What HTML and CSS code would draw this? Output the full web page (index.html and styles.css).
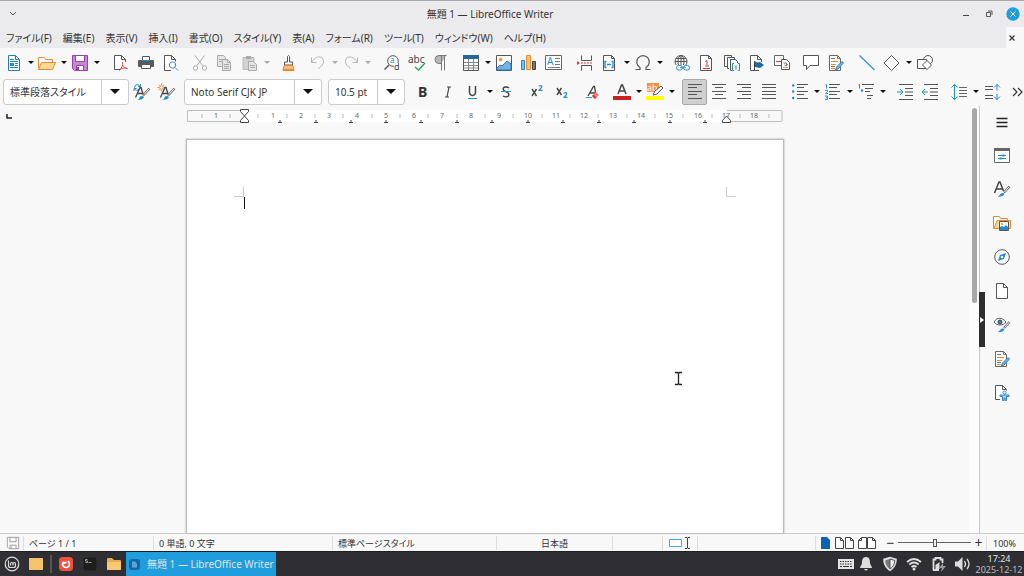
FILE: index.html
```html
<!DOCTYPE html>
<html lang="ja">
<head>
<meta charset="utf-8">
<meta name="viewport" content="width=device-width, initial-scale=1">
<title>無題 1 — LibreOffice Writer</title>
<link rel="stylesheet" href="styles.css">
</head>
<body>
<header class="titlebar">
  <button class="win-btn" aria-label="ウィンドウメニュー"><svg class="i" viewBox="0 0 16 16"><path d="M5 6l3 3 3-3" stroke="#555"/></svg></button>
  <h1 class="title">無題 1 — LibreOffice Writer</h1>
  <div class="win-controls">
    <button class="win-btn" aria-label="最小化"><svg class="i" viewBox="0 0 16 16"><path d="M6 9.500h6" stroke="#444"/></svg></button>
    <button class="win-btn" aria-label="元に戻す"><svg class="i" viewBox="0 0 16 16"><path d="M5.500 6.500h4v4h-4zM7 5h4v4" stroke="#555"/></svg></button>
    <button class="win-btn" aria-label="閉じる"><svg class="i" viewBox="0 0 16 16"><circle cx="8" cy="8" r="6.700" fill="#1f9ddc"/><path d="M5.500 5.500l5 5M10.500 5.500l-5 5" stroke="#fff"/></svg></button>
  </div>
</header>

<nav class="menubar">
  <button>ファイル(F)</button><button>編集(E)</button><button>表示(V)</button><button>挿入(I)</button><button>書式(O)</button><button>スタイル(Y)</button><button>表(A)</button><button>フォーム(R)</button><button>ツール(T)</button><button>ウィンドウ(W)</button><button>ヘルプ(H)</button>
  <button class="doc-close" aria-label="文書を閉じる"><svg class="i" viewBox="0 0 16 16"><path d="M3.500 5.500l5 5M8.500 5.500l-5 5" stroke="#333" stroke-width="1.200"/></svg></button>
</nav>

<div class="toolbar" role="toolbar" aria-label="標準">
  <div class="split"><button class="tool" aria-label="新規作成"><svg class="i" viewBox="0 0 16 16"><path d="M2.500.500h7l4 4v11h-11z" fill="#fff" stroke="#2a7ab8"/><path d="M9.500.500v4h4" stroke="#2a7ab8"/><path d="M4 4.500h4M4 6.500h8M4 12.500h8" stroke="#1f8ad2"/><path d="M4 8h4v3H4z" fill="#1f8ad2"/><path d="M9 8.500h3M9 10.500h3" stroke="#1f8ad2"/></svg></button><button class="arrow" aria-label="新規作成の種類"></button></div>
  <div class="split"><button class="tool" aria-label="開く"><svg class="i wide" viewBox="0 0 18 16"><path d="M.500 13.500v-11h6l1 2h7v3" fill="#fff" stroke="#ed8733"/><path d="M.500 14.500l3-7h14l-3 7z" fill="#fbdb93" stroke="#ed8733"/></svg></button><button class="arrow" aria-label="最近使用したファイル"></button></div>
  <div class="split"><button class="tool" aria-label="保存"><svg class="i" viewBox="0 0 16 16"><path d="M.500.500h15v15h-13l-2-2z" fill="#c786d0" stroke="#9a3da8"/><path d="M3.500.500h9v6h-9z" fill="#fff" stroke="#9a3da8"/><path d="M4.500 10.500h7v5h-7z" fill="#fff" stroke="#9a3da8"/><path d="M5 12h2v3H5z" fill="#9a3da8"/></svg></button><button class="arrow" aria-label="保存の種類"></button></div>
  <span class="sep-l"></span>
  <button class="tool" aria-label="PDFとしてエクスポート"><svg class="i" viewBox="0 0 16 16"><path d="M8 14.500H1.500v-14h7l4 4V7" fill="#fff" stroke="#555"/><path d="M8.500.500v4h4" stroke="#555"/><path d="M9.500 7c1 3-1 6-3 8.500M9.500 10c1 2 2.500 3 5 3.500M6.500 15c2-2 5-2.500 8-1.500" stroke="#e0454c"/></svg></button>
  <button class="tool" aria-label="印刷"><svg class="i" viewBox="0 0 16 16"><path d="M4.500 1.500h7v4h-7z" fill="#fff" stroke="#555"/><rect x="0" y="5" width="16" height="7" rx="1" fill="#5a5a5a"/><path d="M4 5h8v1H4z" fill="#2a8ad2"/><path d="M3.500 9.500h9v4h-9z" fill="#fff" stroke="#555"/></svg></button>
  <button class="tool" aria-label="印刷プレビュー"><svg class="i" viewBox="0 0 16 16"><path d="M8 15.500H1.500v-15h7l4 4v2" fill="#fff" stroke="#555"/><path d="M8.500.500v4h4" stroke="#555"/><circle cx="9.500" cy="10" r="3.200" fill="#fff" stroke="#2e90cf"/><path d="M12 12.500l3 3" stroke="#2e90cf"/></svg></button>
  <span class="sep-s"></span>
  <button class="tool" aria-label="切り取り"><svg class="i" viewBox="0 0 16 16"><path d="M3 .500l8 10.500M12.500.500l-8 10.500" stroke="#aaa"/><circle cx="3.500" cy="13" r="2.200" stroke="#aaa"/><circle cx="12.500" cy="13" r="2.200" stroke="#aaa"/></svg></button>
  <button class="tool" aria-label="コピー"><svg class="i" viewBox="0 0 16 16"><path d="M.500.500h6l2 2v9h-8z" fill="#e4e4e4" stroke="#aaa"/><path d="M5.500 4.500h5l3 3v8h-8z" fill="#e4e4e4" stroke="#aaa"/><path d="M2 4.500h3M2 6.500h3M7 9.500h5M7 11.500h5M7 13.500h5M10.500 4.500v3h3" stroke="#aaa"/></svg></button>
  <div class="split"><button class="tool" aria-label="貼り付け"><svg class="i" viewBox="0 0 16 16"><path d="M1 2.500h11v12H1z" fill="#d2d2d2" stroke="#bbb"/><path d="M4 1h5v3H4z" fill="#aaa"/><path d="M6.500 6.500h5l3 3v6h-8z" fill="#e4e4e4" stroke="#aaa"/><path d="M8 10.500h5M8 12.500h5" stroke="#aaa"/></svg></button><button class="arrow off" aria-label="貼り付けの種類"></button></div>
  <span class="sep-m"></span>
  <button class="tool" aria-label="書式のコピー"><svg class="i" viewBox="0 0 16 16"><path d="M6.500 7V1.500Q7.500-.500 8.500 1.500V7h3v3h-8V7z" fill="#fff" stroke="#555"/><path d="M3 10.500h9l1 5H2z" fill="#fbc284" stroke="#ed8733"/><path d="M2 14h11v1.500H2z" fill="#ed8733"/></svg></button>
  <span class="sep-s"></span>
  <div class="split"><button class="tool" aria-label="元に戻す"><svg class="i" viewBox="0 0 16 16"><path d="M1.500 2.500v5h5M1.500 7.500C6-.500 14 1 13.500 6.500c0 3-2.500 5-5 7" stroke="#b5b5b5"/></svg></button><button class="arrow off" aria-label="元に戻す履歴"></button></div>
  <div class="split"><button class="tool" aria-label="やり直し"><svg class="i" viewBox="0 0 16 16"><path d="M14.500 2.500v5h-5M14.500 7.500C10-.500 2 1 2.500 6.500c0 3 2.500 5 5 7" stroke="#b5b5b5"/></svg></button><button class="arrow off" aria-label="やり直し履歴"></button></div>
  <span class="sep-l"></span>
  <button class="tool" aria-label="検索と置換"><svg class="i" viewBox="0 0 16 16"><circle cx="9" cy="6" r="5.300" fill="#fff" stroke="#555"/><path d="M5 10L.500 14.500" stroke="#555" stroke-width="1.500"/><text x="6" y="8" font-size="8" fill="#1e8bcd">a</text><path d="M10 8h6v8h-6z" fill="#f8f8f8"/><text x="10" y="15" font-size="9" fill="#444">d</text></svg></button>
  <button class="tool" aria-label="スペルチェック"><svg class="i wide" viewBox="0 0 18 16"><text x="0" y="8" font-size="10" fill="#444">abc</text><path d="M7 12l3.500 3L17 8" stroke="#25a65a" stroke-width="1.300"/></svg></button>
  <button class="tool" aria-label="編集記号"><svg class="i" viewBox="0 0 16 16"><path d="M12 .500H5a4 4 0 000 8h2z" fill="#b8b8b8"/><path d="M12.500.500H5a4 4 0 000 8h2M7.500.500v15M10.500.500v15" stroke="#777"/></svg></button>
  <span class="sep-s"></span>
  <div class="split"><button class="tool" aria-label="表を挿入"><svg class="i" viewBox="0 0 16 16"><path d="M.500.500h15v15H.500z" fill="#fff" stroke="#555"/><path d="M0 0h16v4H0z" fill="#23699f"/><path d="M1 7.500h14M1 10.500h14M1 13h14M5.500 4v11M10.500 4v11" stroke="#888"/></svg></button><button class="arrow" aria-label="表のサイズ"></button></div>
  <button class="tool" aria-label="画像を挿入"><svg class="i" viewBox="0 0 16 16"><path d="M.500.500h15v15H.500z" fill="#fff" stroke="#555"/><circle cx="4.500" cy="4.500" r="2" fill="#f9a24c"/><path d="M1 13l3-3 2 1 5-5 4 3v6H1z" fill="#72b4e5" stroke="#2479b5"/></svg></button>
  <button class="tool" aria-label="グラフを挿入"><svg class="i" viewBox="0 0 16 16"><path d="M.500 5.500h3v9h-3z" fill="#83beec" stroke="#1e8bcd"/><path d="M5.500.500h4v14h-4z" fill="#fbc56f" stroke="#ed8733"/><path d="M11.500 6.500h3v8h-3z" fill="#777" stroke="#444"/></svg></button>
  <button class="tool" aria-label="テキストボックスを挿入"><svg class="i wide" viewBox="0 0 18 16"><path d="M.500.500h16v14H.500z" fill="#fff" stroke="#666"/><text x="2" y="10" font-size="10" fill="#1e8bcd">A</text><path d="M10 3.500h5M10 6.500h5M10 9.500h5M3 12.500h12" stroke="#777"/></svg></button>
  <span class="sep-m"></span>
  <button class="tool" aria-label="改ページを挿入"><svg class="i" viewBox="0 0 16 16"><path d="M4.500.500v5h10v-5M4.500 15.500v-5h10v5" stroke="#555"/><path d="M4 8h12" stroke="#d9363e" stroke-dasharray="2 1"/><path d="M0 6l3 2-3 2z" fill="#d9363e"/></svg></button>
  <div class="split"><button class="tool" aria-label="フィールドを挿入"><svg class="i" viewBox="0 0 16 16"><path d="M1.500.500h8l3 3v12h-11z" fill="#fff" stroke="#555"/><path d="M9.500.500v3h3" stroke="#555"/><path d="M4.500 6.500H3v6h1.500M9.500 6.500H11v6H9.500M5 9.500h4" stroke="#1e8bcd" stroke-width="1.300"/></svg></button><button class="arrow" aria-label="フィールドの種類"></button></div>
  <div class="split"><button class="tool" aria-label="特殊文字を挿入"><svg class="i" viewBox="0 0 16 16"><path d="M.500 14.500H5v-2a6.300 6.300 0 116 0v2h4.500" stroke="#555" stroke-width="1.200"/></svg></button><button class="arrow" aria-label="特殊文字の一覧"></button></div>
  <span class="sep-m"></span>
  <button class="tool" aria-label="ハイパーリンクを挿入"><svg class="i" viewBox="0 0 16 16"><circle cx="7" cy="6.500" r="6" stroke="#555"/><ellipse cx="7" cy="6.500" rx="3" ry="6" stroke="#555"/><path d="M1 6.500h12M2 3.500h10M7 .500v12" stroke="#555"/><path d="M2 10h14v6H2z" fill="#f8f8f8"/><rect x="2.500" y="10.500" width="6" height="4.500" rx="2.200" stroke="#2e90cf"/><rect x="9.500" y="10.500" width="6" height="4.500" rx="2.200" stroke="#2e90cf"/><path d="M6 12.700h6" stroke="#2e90cf"/></svg></button>
  <button class="tool" aria-label="脚注を挿入"><svg class="i" viewBox="0 0 16 16"><path d="M1.500.500h8l3 3v12h-11z" fill="#fff" stroke="#555"/><path d="M9.500.500v3h3" stroke="#555"/><path d="M4 13.500h7M6 6.500l2-1v5M6 11h4" stroke="#d9363e"/></svg></button>
  <button class="tool" aria-label="相互参照を挿入"><svg class="i" viewBox="0 0 16 16"><path d="M3 11.500H.500V.500h7V3M5 13.500H3.500v-11h7V5M8 15.500H6.500v-11h5l2 2V8" stroke="#555"/><path d="M10 8.500H8.500v7H10M14 8.500h1.500v7H14M12 10.500v4" stroke="#1e8bcd"/></svg></button>
  <button class="tool" aria-label="ブックマークを挿入"><svg class="i" viewBox="0 0 16 16"><path d="M10 15.500H1.500V.500h7l4 4V7M8.500.500v4h4" fill="#fff" stroke="#555"/><path d="M5.500 6v10" stroke="#444"/><path d="M6 6.500l3 1 2-.500 4 3-4 3-5-1z" fill="#1769aa"/></svg></button>
  <button class="tool" aria-label="ハイパーリンク先"><svg class="i" viewBox="0 0 16 16"><path d="M.500.500h9v10h-9z" fill="#fff" stroke="#666"/><path d="M2 6.500h5" stroke="#d9363e"/><path d="M7.500 4.500h5l3 3v7h-8z" fill="#fff" stroke="#555"/><path d="M9.500 8h3v3M10.500 10l2 1 1-2" stroke="#777"/><path d="M9 12.500h5" stroke="#e88"/></svg></button>
  <span class="sep-s"></span>
  <button class="tool" aria-label="コメントを挿入"><svg class="i" viewBox="0 0 16 16"><path d="M.500.500h15v10H7l-3.500 4v-4h-3z" fill="#fff" stroke="#555"/></svg></button>
  <button class="tool" aria-label="変更の記録"><svg class="i" viewBox="0 0 16 16"><path d="M1.500.500h8l3 3v12h-11z" fill="#fff" stroke="#666"/><path d="M3 3.500h4M3 11.500h4M9.500.500v3h3" stroke="#777"/><path d="M3 6.500h7M3 9.500h5M3 13.500h4" stroke="#ed8733"/><path d="M7.500 15l1-3 5.500-5.500 1.500 1.500-5.500 6z" fill="#72b4e5" stroke="#2e84c4"/></svg></button>
  <span class="sep-m"></span>
  <button class="tool" aria-label="線を挿入"><svg class="i" viewBox="0 0 16 16"><path d="M.500.500l15 14.500" stroke="#2e90cf" stroke-width="1.200"/></svg></button>
  <div class="split"><button class="tool" aria-label="図形"><svg class="i" viewBox="0 0 16 16"><path d="M7.500.500L15 8l-7.500 7.500L0 8z" fill="#fff" stroke="#555"/></svg></button><button class="arrow" aria-label="図形の種類"></button></div>
  <button class="tool" aria-label="図形描画機能"><svg class="i" viewBox="0 0 16 16"><circle cx="11" cy="5" r="4.500" stroke="#555"/><path d="M.500 4.500h9v9h-9z" fill="#f8f8f8" stroke="#555"/><path d="M10 5.500l4.500 4.500-4.500 4.500L5.500 10z" fill="#fff" stroke="#555"/></svg></button>
</div>

<div class="toolbar format" role="toolbar" aria-label="書式設定">
  <div class="combo style"><input type="text" aria-label="段落スタイル" value="標準段落スタイル"><button class="arrow big" aria-label="段落スタイルの一覧"></button></div>
  <button class="tool" aria-label="スタイルの更新"><svg class="i wide" viewBox="0 0 18 16"><path d="M1.500 3.500A3 3 0 016.500 1.500M7.500 0v2.500H5M7 4A3 3 0 012 5.500M1 7V4.500h2.500" stroke="#1e8bcd"/><path d="M2.500 13.500L7 3.500h1l2.500 8M5 9.500h4.500" stroke="#444" stroke-width="1.300"/><path d="M16.500 4.500L10.500 11" stroke="#666" stroke-width="2.400"/><path d="M16.300 4.700L11 10.500" stroke="#fff"/><path d="M4 15.500c3 0 2-3.500 5-3.500 4 .500 1 4.500-5 3.500z" fill="#1e8bcd"/></svg></button>
  <button class="tool" aria-label="新規スタイル"><svg class="i wide" viewBox="0 0 18 16"><circle cx="3.500" cy="3.500" r="1.800" stroke="#ed8733"/><path d="M3.500 -.500V1M3.500 6v1.500M-.500 3.500H1M6 3.500h1.500M.800.800l1 1M6.200.800l-1 1M.800 6.200l1-1" stroke="#ed8733"/><path d="M2.500 13.500L7 3.500h1l2.500 8M5 9.500h4.500" stroke="#444" stroke-width="1.300"/><path d="M16.500 4.500L10.500 11" stroke="#666" stroke-width="2.400"/><path d="M16.300 4.700L11 10.500" stroke="#fff"/><path d="M4 15.500c3 0 2-3.500 5-3.500 4 .500 1 4.500-5 3.500z" fill="#1e8bcd"/></svg></button>
  <span class="sep-s"></span>
  <div class="combo font"><input type="text" aria-label="フォント名" value="Noto Serif CJK JP"><button class="arrow big" aria-label="フォントの一覧"></button></div>
  <span class="sep-m"></span>
  <div class="combo size"><input type="text" aria-label="フォントサイズ" value="10.5 pt"><button class="arrow big" aria-label="フォントサイズの一覧"></button></div>
  <span class="sep-m"></span>
  <button class="tool" aria-label="太字"><svg class="i" viewBox="0 0 16 16"><text x="3" y="13" font-size="14" font-weight="700" fill="#333">B</text></svg></button>
  <button class="tool" aria-label="斜体"><svg class="i" viewBox="0 0 16 16"><path d="M7 3h4M5 13h4M9 3L7 13" stroke="#444" stroke-width="1.200"/></svg></button>
  <div class="split"><button class="tool" aria-label="下線"><svg class="i" viewBox="0 0 16 16"><path d="M4.500 2v6c0 4.500 6 4.500 6 0V2" stroke="#444" stroke-width="1.500"/><path d="M3 14.500h9" stroke="#1e8bcd"/></svg></button><button class="arrow" aria-label="下線の種類"></button></div>
  <button class="tool" aria-label="取り消し線"><svg class="i" viewBox="0 0 16 16"><path d="M11 4C9 2.500 5 2.500 5.200 5.200S11 8 11 10.500s-3.500 3-6 1.500" stroke="#444" stroke-width="1.400"/><path d="M3 7.500h10" stroke="#2e90cf"/></svg></button>
  <span class="sep-m"></span>
  <button class="tool" aria-label="上付き"><svg class="i" viewBox="0 0 16 16"><path d="M3 5l4.500 7M7.500 5L3 12" stroke="#444" stroke-width="1.400"/><text x="9" y="7" font-size="8" font-weight="700" fill="#1e8bcd">2</text></svg></button>
  <button class="tool" aria-label="下付き"><svg class="i" viewBox="0 0 16 16"><path d="M3 4l4.500 7M7.500 4L3 11" stroke="#444" stroke-width="1.400"/><text x="9" y="14" font-size="8" font-weight="700" fill="#1e8bcd">2</text></svg></button>
  <span class="sep-m"></span>
  <button class="tool" aria-label="書式のクリア"><svg class="i" viewBox="0 0 16 16"><path d="M3 12L8.500 2.500h1L10.500 9M5 9h5" stroke="#444" stroke-width="1.300"/><path d="M1 13.500h6" stroke="#2e90cf"/><path d="M7 12l4-4 3 3-4 4z" fill="#f7797d"/><path d="M7 12l1.500-1.500 3 3L10 15z" fill="#d9363e"/></svg></button>
  <span class="sep-s"></span>
  <div class="split"><button class="tool" aria-label="文字の色"><svg class="i wide" viewBox="0 0 18 16"><path d="M5 10L8.500 1h1L13 10M6.500 7h5" stroke="#444" stroke-width="1.500"/><path d="M0 12h18v4H0z" fill="#c9211e"/></svg></button><button class="arrow" aria-label="文字の色の一覧"></button></div>
  <div class="split"><button class="tool" aria-label="蛍光ペンの色"><svg class="i wide" viewBox="0 0 18 16"><path d="M1 -1h12v9H1z" fill="#f7933f"/><text x="1" y="7" font-size="9" fill="#fff">ab</text><path d="M7 11l2-4 6-5 2 2-6 6z" fill="#fff" stroke="#555"/><path d="M0 12h18v4H0z" fill="#ffff00"/></svg></button><button class="arrow" aria-label="蛍光ペンの色の一覧"></button></div>
  <span class="sep-m"></span>
  <button class="tool pressed" aria-label="左揃え" aria-pressed="true"><svg class="i" viewBox="0 0 16 16"><path d="M1 .500h14M1 3.500h9M1 7.500h14M1 10.500h9M1 14.500h14" stroke="#555"/></svg></button>
  <button class="tool" aria-label="中央揃え"><svg class="i" viewBox="0 0 16 16"><path d="M1 .500h14M4 3.500h8M1 7.500h14M4 10.500h8M1 14.500h14" stroke="#555"/></svg></button>
  <button class="tool" aria-label="右揃え"><svg class="i" viewBox="0 0 16 16"><path d="M1 .500h14M6 3.500h9M1 7.500h14M6 10.500h9M1 14.500h14" stroke="#555"/></svg></button>
  <button class="tool" aria-label="両端揃え"><svg class="i" viewBox="0 0 16 16"><path d="M1 .500h14M1 3.500h14M1 7.500h14M1 10.500h14M1 14.500h14" stroke="#555"/></svg></button>
  <span class="sep-m"></span>
  <div class="split"><button class="tool" aria-label="箇条書き"><svg class="i" viewBox="0 0 16 16"><path d="M5 .500h11M5 3.500h7M5 7.500h11M5 10.500h7M5 14.500h11" stroke="#555"/><circle cx="1.200" cy="1.500" r="1.200" fill="#1e8bcd"/><circle cx="1.200" cy="7.500" r="1.200" fill="#1e8bcd"/><circle cx="1.200" cy="14" r="1.200" fill="#1e8bcd"/></svg></button><button class="arrow" aria-label="箇条書きの種類"></button></div>
  <div class="split"><button class="tool" aria-label="番号付け"><svg class="i" viewBox="0 0 16 16"><path d="M4 .500h11M4 3.500h8M4 7.500h11M4 10.500h8M4 14.500h11" stroke="#555"/><path d="M.500 1l1-.500v4M0 6.500h2.500v1.300L.500 9.500H3M0 12h2.500v3.500H0M1 13.700h1.500" stroke="#2e90cf"/></svg></button><button class="arrow" aria-label="番号付けの種類"></button></div>
  <div class="split"><button class="tool" aria-label="アウトライン"><svg class="i" viewBox="0 0 16 16"><path d="M4 .500h12M7 4.500h8M7 7.500h5M9 11.500h6M9 14.500h4" stroke="#555"/><path d="M.500 1l1-.500v4" stroke="#2e90cf"/><circle cx="4" cy="6.500" r="1.200" fill="#1e8bcd"/></svg></button><button class="arrow" aria-label="アウトラインの種類"></button></div>
  <span class="sep-m"></span>
  <button class="tool" aria-label="インデントを増やす"><svg class="i wide" viewBox="0 0 18 16"><path d="M3 .500h14M9 4.500h8M9 8h8M9 11.500h8M3 15.500h14" stroke="#555"/><path d="M1 8h6M4 5l3 3-3 3" stroke="#1e8bcd"/></svg></button>
  <button class="tool" aria-label="インデントを減らす"><svg class="i wide" viewBox="0 0 18 16"><path d="M3 .500h14M9 4.500h8M9 8h8M9 11.500h8M3 15.500h14" stroke="#555"/><path d="M1 8h6M4 5L1 8l3 3" stroke="#1e8bcd"/></svg></button>
  <span class="sep-s"></span>
  <div class="split"><button class="tool" aria-label="行間"><svg class="i" viewBox="0 0 16 16"><path d="M8 3.500h8M8 6.500h8M8 9.500h8M8 12.500h8" stroke="#666"/><path d="M3.500.500v15M.500 3.500l3-3 3 3M.500 12.500l3 3 3-3" stroke="#1e8bcd"/></svg></button><button class="arrow" aria-label="行間の種類"></button></div>
  <button class="tool" aria-label="段落間隔を増やす"><svg class="i wide" viewBox="0 0 18 16"><path d="M2 2.500h8M2 5.500h8M2 11.500h8M2 14.500h8" stroke="#555"/><path d="M14 .500v6M11 3.500l3-3 3 3M14 10v6M11 12.500l3 3 3-3" stroke="#1e8bcd"/></svg></button>
  <button class="tool more" aria-label="その他"><svg class="i" viewBox="0 0 16 16"><path d="M5 4l4 4-4 4M10 4l4 4-4 4" stroke="#333" stroke-width="1.200"/></svg></button>
</div>

<main class="work">
  <section class="editor">
    <div class="ruler-row">
      <svg class="tab-kind" viewBox="0 0 6 6"><path d="M1 1v4h5" stroke="#222" stroke-width="1.500"/></svg>
      <svg class="ruler" viewBox="0 0 598 16" role="img" aria-label="ルーラー">
        <path d="M58 2h483v12H58z" fill="#fff"/>
        <path d="M58 2.500H1.500v11H58M541 2.500h54q1 0 1 1v9q0 1-1 1h-54" stroke="#bdbdbd"/>
        <path d="M16 6v4M44 6v4M72 6v4M101 6v4M129 6v4M157 6v4M186 6v4M214 6v4M242 6v4M271 6v4M299 6v4M327 6v4M356 6v4M384 6v4M412 6v4M441 6v4M469 6v4M497 6v4M526 6v4M554 6v4M583 6v4" stroke="#bbb"/>
        <path d="M94 12v3M130 12v3M165 12v3M200 12v3M235 12v3M271 12v3M306 12v3M342 12v3M377 12v3M413 12v3M448 12v3M484 12v3M519 12v3" stroke="#444"/>
        <path d="M92 14.500h4M128 14.500h4M163 14.500h4M198 14.500h4M233 14.500h4M269 14.500h4M304 14.500h4M340 14.500h4M375 14.500h4M411 14.500h4M446 14.500h4M482 14.500h4M517 14.500h4" stroke="#444"/>
        <g font-size="7" fill="#666" text-anchor="middle"><text x="30" y="10">1</text><text x="87" y="10">1</text><text x="115" y="10">2</text><text x="143" y="10">3</text><text x="171" y="10">4</text><text x="200" y="10">5</text><text x="228" y="10">6</text><text x="256" y="10">7</text><text x="285" y="10">8</text><text x="313" y="10">9</text><text x="342" y="10">10</text><text x="370" y="10">11</text><text x="398" y="10">12</text><text x="427" y="10">13</text><text x="455" y="10">14</text><text x="483" y="10">15</text><text x="512" y="10">16</text><text x="540" y="10">17</text><text x="568" y="10">18</text></g>
        <path d="M54.500 1.500h8v2l-4 4.500-4-4.500zM54.500 14.500h8v-2L58.500 8l-4 4.500z" fill="#fff" stroke="#444"/>
        <path d="M536.500 14.500h8v-2l-4-4.500-4 4.500z" fill="#fff" stroke="#444"/>
      </svg>
    </div>
    <article class="page" aria-label="文書">
      <div class="text-area"><span class="crop left"></span><span class="caret"></span><span class="crop right"></span></div>
    </article>
    <svg class="pointer" viewBox="0 0 9 15"><path d="M1 1.500h2.500l1 1 1-1H8M1 13.500h2.500l1-1 1 1H8M4.500 2v11" stroke="#222" stroke-width="1.300"/></svg>
  </section>
  <div class="scroll"><div class="thumb"></div></div>
  <aside class="sidebar">
    <button class="handle" aria-label="サイドバーを隠す"><svg viewBox="0 0 5 8"><path d="M1 1l4 3-4 3z" fill="#fff"/></svg></button>
    <button class="deck" aria-label="サイドバーの設定"><svg class="i" viewBox="0 0 16 16"><path d="M2.500 4.500h11M2.500 8.500h11M2.500 12.500h11" stroke="#222" stroke-width="1.500"/></svg></button>
    <button class="deck" aria-label="プロパティ"><svg class="i" viewBox="0 0 16 16"><path d="M.500 1.500h15v14H.500z" fill="#fff" stroke="#666"/><path d="M0 1h16v3H0z" fill="#666"/><path d="M4 8.500h8M4 11.500h8" stroke="#1e8bcd"/><path d="M9.500 7.500v2M6.500 10.500v2" stroke="#1e8bcd" stroke-width="2"/></svg></button>
    <button class="deck" aria-label="スタイル"><svg class="i" viewBox="0 0 16 16"><path d="M.500 12L5 1h1l3.500 9M2.500 8h6" stroke="#444" stroke-width="1.500"/><path d="M15.500 5.500L10 11.500" stroke="#666" stroke-width="2.400"/><path d="M15.300 5.700L10.500 11" stroke="#fff"/><path d="M3 15.500c3 0 3-4 6-3.500 3.500.500 0 4.500-6 3.500z" fill="#2e90cf"/></svg></button>
    <button class="deck" aria-label="ギャラリー"><svg class="i wide" viewBox="0 0 18 16"><path d="M.500 13.500v-12h6l1 2h7v2h3" fill="#fff" stroke="#ed8733"/><path d="M1 13.500l3-8h13.500v8z" fill="#fbdb93" stroke="#ed8733"/><path d="M6.500 6.500h9v9h-9z" fill="#fff" stroke="#555"/><path d="M7 15v-3l2-1 2 1 2-2 2 2v3z" fill="#1e8bcd"/><circle cx="9" cy="9" r="1" fill="#ed8733"/></svg></button>
    <button class="deck" aria-label="ナビゲーター"><svg class="i" viewBox="0 0 16 16"><circle cx="8" cy="8" r="7.300" fill="#fff" stroke="#555"/><path d="M12 4l-2 6-6 2 2-6z" fill="#1e8bcd"/><circle cx="8" cy="8" r="1.300" fill="#fff"/></svg></button>
    <button class="deck" aria-label="ページ"><svg class="i" viewBox="0 0 16 16"><path d="M2.500.500h7l4 4v11h-11zM9.500.500v4h4" fill="#fff" stroke="#555"/></svg></button>
    <button class="deck" aria-label="スタイルインスペクター"><svg class="i" viewBox="0 0 16 16"><path d="M0 5c3-5 8-5 12 0-3 4-9 4-12 0z" fill="#fff" stroke="#555"/><circle cx="6" cy="5" r="2" fill="#1e8bcd" stroke="#444"/><path d="M15.500 5L10 11" stroke="#666" stroke-width="2.400"/><path d="M15.300 5.200L10.500 10.500" stroke="#fff"/><path d="M3 15c3 0 3-4 6-3.500 3.500.500 0 4.500-6 3.500z" fill="#2e90cf"/></svg></button>
    <button class="deck" aria-label="変更の管理"><svg class="i" viewBox="0 0 16 16"><path d="M1.500.500h8l3 3v12h-11z" fill="#fff" stroke="#666"/><path d="M3 3.500h4M3 11.500h4M9.500.500v3h3" stroke="#777"/><path d="M3 6.500h7M3 9.500h5M3 13.500h4" stroke="#ed8733"/><path d="M7.500 15l1-3 5.500-5.500 1.500 1.500-5.500 6z" fill="#72b4e5" stroke="#2e84c4"/></svg></button>
    <button class="deck" aria-label="アクセシビリティ"><svg class="i" viewBox="0 0 16 16"><path d="M6 14.500H1.500V.500h7l4 4v1M8.500.500v4h4" fill="#fff" stroke="#555"/><circle cx="10.500" cy="7.500" r="1.500" fill="#fff" stroke="#2e84c4"/><path d="M6 10h9v1.500h-2.500v4h-1.500v-2.500h-1v2.500H8.500v-4H6z" fill="#a9d3f2" stroke="#2e84c4"/></svg></button>
  </aside>
</main>

<footer class="statusbar">
  <span class="cell icon"><svg class="i save" viewBox="0 0 16 16"><path d="M1.500 1.500h13v13h-11l-2-2zM4.500 1.500v5h7v-5M4.500 14.500v-4h7v4M6.500 12v2" stroke="#999"/></svg></span>
  <span class="cell">ページ 1 / 1</span>
  <span class="cell">0 単語, 0 文字</span>
  <span class="cell">標準ページスタイル</span>
  <span class="cell center">日本語</span>
  <span class="cell"></span>
  <span class="cell modes"><svg viewBox="0 0 24 14"><path d="M1.500 3.500h12v7h-12z" fill="#fff" stroke="#4aa5dc"/><path d="M17 1.500h2l.500.500.500-.500h2M17 12.500h2l.500-.500.500.500h2M19.500 2v10" stroke="#444"/></svg></span>
  <span class="cell"></span>
  <span class="cell views"><svg viewBox="0 0 56 14"><path d="M0 1h6l3 3v9H0z" fill="#0a64b4"/><path d="M14.500 1.500h5l3 3v8h-8zM19.500 1.500v3h3M24.500 1.500h5l3 3v8h-8zM29.500 1.500v3h3M45.500 1.500h-5l-3 3v8h8zM40.500 1.500v3h-3M46.500 1.500h5l3 3v8h-8zM51.500 1.500v3h3" fill="#fff" stroke="#444"/></svg></span>
  <span class="cell zoom"><button aria-label="縮小">−</button><input type="range" min="0" max="100" value="50" aria-label="ズーム"><button aria-label="拡大">+</button></span>
  <span class="cell percent">100%</span>
</footer>

<div class="taskbar">
  <button class="launch" aria-label="メニュー"><svg class="i" viewBox="0 0 16 16"><circle cx="8" cy="8" r="6.800" stroke="#ddd" stroke-width="1.200"/><path d="M4.500 4.500v5q0 2 2 2h3q2 0 2-2V8q0-1.500-1.200-1.500T9 8v1.500M9 8q0-1.500-1.200-1.500T6.600 8v1.500" stroke="#ddd" stroke-width="1.200"/></svg></button>
  <button class="launch" aria-label="デスクトップを表示"><svg class="i" viewBox="0 0 16 16"><rect x="1" y="2" width="14" height="12" rx="1" fill="#f6c26b"/></svg></button>
  <span class="divider"></span>
  <button class="launch" aria-label="ブラウザー"><svg class="i" viewBox="0 0 16 16"><rect x="1" y="1" width="14" height="14" rx="3.500" fill="#f0503c"/><path d="M5 6C3.500 9.500 5.500 11.500 8 11.500s4.500-2.500 3-5L10 5M5 6l1.500 1.200L8.500 6" stroke="#fff" stroke-width="1.700"/></svg></button>
  <button class="launch" aria-label="端末"><svg class="i" viewBox="0 0 16 16"><rect x="1" y="1" width="14" height="14" rx="2" fill="#1d1d1d" stroke="#333"/><path d="M5.500 3.500H3.500V5h2v1.500h-2M6.500 6.500h3" stroke="#bbb" stroke-width=".800"/></svg></button>
  <button class="launch" aria-label="ファイル"><svg class="i" viewBox="0 0 16 16"><path d="M1 3q0-1 1-1h4l2 2h6q1 0 1 1v8q0 1-1 1H2q-1 0-1-1z" fill="#e5ac50"/><path d="M1 6h14v7q0 1-1 1H2q-1 0-1-1z" fill="#f8c873"/></svg></button>
  <button class="task"><svg class="i" viewBox="0 0 16 16"><rect x="3" y="3" width="11" height="11" rx="3" fill="#1169a4"/><path d="M6 5.500h3l2 2v4H6z" fill="#5aa5d6"/></svg>無題 1 — LibreOffice Writer</button>
  <div class="tray">
    <button class="tray-btn" aria-label="キーボード"><svg class="i" viewBox="0 0 16 16"><path d="M0 3h16v10H0z" fill="#e4e4e4"/><path d="M2 5.500h12M2 8h12" stroke="#333" stroke-dasharray="1.500 1"/><path d="M2 10.500h2M5 10.500h6M12 10.500h2" stroke="#333"/></svg></button>
    <button class="tray-btn" aria-label="通知"><svg class="i" viewBox="0 0 16 16"><path d="M8 1c3.500 0 4 3 4 6 0 2 2 3 2 5H2c0-2 2-3 2-5 0-3 .500-6 4-6zM6 13h4q-2 3-4 0z" fill="#ddd"/></svg></button>
    <button class="tray-btn far" aria-label="アップデート"><svg class="i" viewBox="0 0 16 16"><path d="M8 .800l6.800 2c0 6-2.500 10-6.800 12.500C3.700 12.800 1.200 8.800 1.200 2.800z" fill="#ddd"/><path d="M8 3L3.200 4.500C3.500 8.500 5 11 8 13z" fill="#777"/><path d="M8 3l4.800 1.500C12.500 8.500 11 11 8 13z" fill="#f2f2f2" stroke="#555"/></svg></button>
    <button class="tray-btn far" aria-label="ネットワーク"><svg class="i" viewBox="0 0 16 16"><path d="M1 6q7-6 14 0M3.300 8.500q4.700-4 9.400 0M5.500 11q2.500-2 5 0" stroke="#ddd" stroke-width="1.700"/><circle cx="8" cy="13" r="1.500" fill="#ddd"/></svg></button>
    <button class="tray-btn far" aria-label="バッテリー"><svg class="i" viewBox="0 0 16 16"><path d="M3.500 14V3.500h2V2h5v1.500h2V7M3 14h6" stroke="#ddd" stroke-width="1.800"/><path d="M5.500 9l4-3v7h-4z" fill="#ddd"/><path d="M13 7l-4 5h3l-1 4 5-6h-3z" fill="#999"/></svg></button>
    <button class="tray-btn far" aria-label="音量"><svg class="i" viewBox="0 0 16 16"><path d="M1 5.500h3L8.500 1v14L4 10.500H1z" fill="#ddd"/><path d="M10.500 5q2 3 0 6M13 3q4 5 0 10" stroke="#ddd" stroke-width="1.300"/></svg></button>
    <div class="clock"><time>17:24</time><time class="date">2025-12-12</time></div>
  </div>
</div>
</body>
</html>
```
FILE: styles.css
```css
* { box-sizing: border-box; }
body {
  margin: 0;
  height: 100vh;
  display: flex;
  flex-direction: column;
  overflow: hidden;
  background: #f8f8f8;
  color: #333;
  font: 9px/12px "Noto Sans", "Noto Sans CJK JP", sans-serif;
  font-feature-settings: "palt";
}
button, input {
  margin: 0;
  padding: 0;
  border: 0;
  background: none;
  color: inherit;
  font: inherit;
  font-feature-settings: inherit;
}
svg { display: block; fill: none; flex: none; overflow: visible; }
.i { width: 16px; height: 16px; }
.i.wide { width: 18px; }

.titlebar {
  display: grid;
  grid-template-columns: 72px 1fr 72px;
  align-items: center;
  height: 27px;
  padding: 0 3px 0 5px;
  border-top: 1px solid #a9a9ab;
  background: #ebebed;
}
.title {
  margin: 0;
  padding-right: 46px;
  font-size: 10px;
  font-weight: 400;
  text-align: center;
}
.win-controls { display: flex; justify-content: flex-end; gap: 8px; }
.win-btn { width: 16px; }

.menubar {
  display: flex;
  align-items: center;
  gap: 11px;
  height: 21px;
  padding-left: 6px;
  background: #ebebed;
  font-size: 10px;
}
.menubar button { white-space: nowrap; }
.menubar .doc-close {
  align-self: stretch;
  width: 18px;
  margin-left: auto;
  background: #f8f8f8;
}

.toolbar { display: flex; align-items: center; height: 29px; padding-left: 2px; flex: none; }
.toolbar.format { padding-left: 3px; }
.split { display: flex; }
.tool {
  display: flex;
  align-items: center;
  justify-content: center;
  width: 25px;
  height: 26px;
  padding-right: 1px;
  flex: none;
}
.split .tool { width: 24px; padding: 0; }
.pressed { padding: 0; border: 1px solid #a8a8a8; border-radius: 2px; background: #d0d0d0; }
.more { width: 16px; margin-left: auto; }
.sep-s { width: 4px; }
.sep-m { width: 6px; }
.sep-l { width: 8px; }
.arrow { display: flex; align-items: center; justify-content: center; width: 9px; }
.arrow::before {
  content: "";
  border: solid transparent;
  border-width: 3px 3px 0;
  border-top-color: #111;
}
.arrow.off::before { border-top-color: #aaa; }
.arrow.big { width: 27px; border-left: 1px solid #ccc; }
.arrow.big::before { border-width: 5px 5px 0; }
.combo {
  display: flex;
  height: 26px;
  border: 1px solid #ccc;
  border-radius: 3px;
  background: #fff;
}
.combo input { flex: 1; min-width: 0; padding-left: 6px; font-size: 10px; }
.style { width: 126px; margin-right: 1px; }
.font { width: 138px; }
.size { width: 77px; }

.work { display: flex; flex: 1; min-height: 0; }
.editor { position: relative; display: flex; flex: 1; flex-direction: column; align-items: center; min-width: 0; }
.ruler-row { display: flex; justify-content: center; align-self: stretch; align-items: center; height: 20px; margin-bottom: 13px; }
.tab-kind { width: 6px; height: 6px; margin: 0 auto 0 6px; }
.ruler { width: 598px; height: 16px; margin-right: auto; margin-left: -12px; }
.page {
  flex: 1;
  width: 598px;
  padding: 47px 47px 0;
  border: 1px solid #bbb;
  border-bottom: 0;
  background: #fff;
  box-shadow: 0 0 2px #aaa;
}
.text-area { display: flex; align-items: flex-start; }
.crop { width: 10px; height: 10px; border: solid #ccc; }
.crop.left { border-width: 0 1px 1px 0; }
.crop.right { margin-left: auto; border-width: 0 0 1px 1px; }
.caret { width: 1px; height: 12px; margin-top: 10px; background: #111; }
.pointer { position: absolute; left: 674px; top: 265px; width: 9px; height: 15px; }

.scroll { width: 10px; padding: 2px 2px 0 3px; background: linear-gradient(#f8f8f8 197px, #fdfdfd 197px); }
.thumb { width: 5px; height: 195px; border-radius: 3px; background: #a8a8a8; }
.sidebar {
  position: relative;
  display: flex;
  flex-direction: column;
  width: 45px;
  border-left: 1px solid #c8c8c8;
}
.deck { display: flex; align-items: center; justify-content: center; height: 34px; }
.handle + .deck { height: 32px; }
.handle {
  position: absolute;
  left: -1px;
  top: 186px;
  display: flex;
  align-items: center;
  width: 6px;
  height: 55px;
  background: #2d2d2d;
}
.handle svg { width: 5px; height: 8px; }

.statusbar {
  display: grid;
  grid-template-columns: 23px 130px 179px 164px 116px 50px 35px 1fr 66px 105px 38px;
  align-items: center;
  height: 18px;
  border-top: 1px solid #ccc;
  background: #f8f8f8;
}
.cell { height: 14px; padding-left: 5px; border-left: 1px solid #ddd; line-height: 16px; white-space: nowrap; }
.cell.icon { display: flex; align-items: center; padding-left: 6px; border: 0; }
.save { width: 14px; height: 14px; }
.center { text-align: center; padding: 0; }
.modes svg { width: 24px; height: 14px; }
.views svg { width: 56px; height: 14px; }
.zoom { display: flex; align-items: center; justify-content: space-between; padding: 0 3px 0 5px; border: 0; }
.zoom button { width: 9px; font-size: 14px; line-height: 12px; }
.zoom input { appearance: none; width: 73px; height: 12px; background: linear-gradient(#666, #666) center / 100% 1px no-repeat; }
.zoom input::-webkit-slider-thumb { appearance: none; width: 4px; height: 8px; border: 1px solid #555; background: #eee; }
.percent { padding-left: 6px; }

.taskbar {
  display: flex;
  align-items: center;
  height: 25px;
  border-top: 1px solid #1f1f22;
  background: #2f2f33;
  color: #e2e2e2;
}
.launch { display: flex; align-items: center; justify-content: center; width: 24px; }
.divider { width: 2px; height: 18px; margin: 0 2px; background: #555; }
.task {
  display: flex;
  align-items: center;
  gap: 5px;
  align-self: stretch;
  width: 150px;
  background: #1f9ddc;
  font-size: 10px;
  white-space: nowrap;
}
.tray { display: flex; align-items: center; margin-left: auto; }
.tray-btn { width: 16px; margin-left: 4px; }
.tray-btn.far { margin-left: 8px; }
.clock { display: flex; flex-direction: column; align-items: center; width: 50px; margin-left: 4px; line-height: 11px; }
.date { color: #bbb; }
```
